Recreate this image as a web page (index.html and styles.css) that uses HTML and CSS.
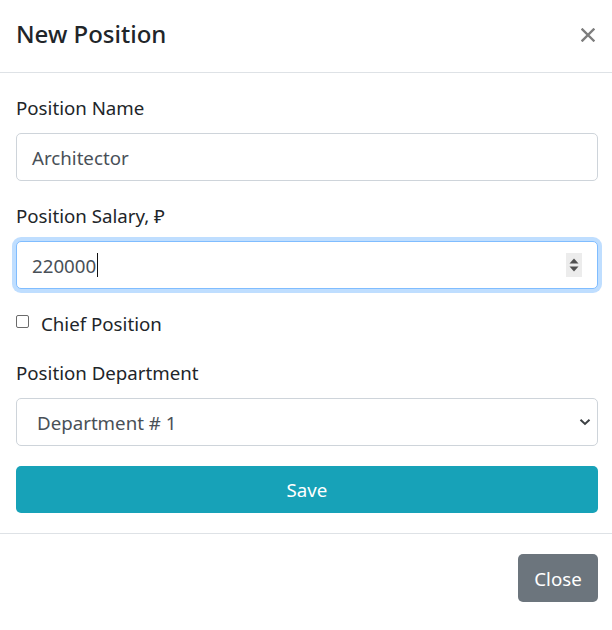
FILE: index.html
```html
<!DOCTYPE html>
<html lang="en">
<head>
<meta charset="utf-8">
<title>New Position</title>
<link rel="stylesheet" href="styles.css">
</head>
<body>
<div class="modal">
  <div class="modal-header">
    <h5 class="modal-title">New Position</h5>
    <button class="close" type="button" aria-label="Close">
      <svg width="14" height="14" viewBox="0 0 14 14"><path d="M1.5 1.5L12.5 12.5M12.5 1.5L1.5 12.5" stroke="#7d7d7d" stroke-width="2.4" stroke-linecap="square"/></svg>
    </button>
  </div>
  <div class="modal-body">
    <div class="form-group">
      <label class="label">Position Name</label>
      <div class="form-control"><span class="value">Architector</span></div>
    </div>
    <div class="form-group">
      <label class="label">Position Salary, ₽</label>
      <div class="form-control focused">
        <span class="value">220000</span><span class="caret"></span>
        <span class="grow"></span>
        <span class="spinner">
          <svg width="16" height="24" viewBox="0 0 16 24"><path d="M3.5 10.5L8 5.5L12.5 10.5Z" fill="#505050"/><path d="M3.5 13.5L8 18.5L12.5 13.5Z" fill="#505050"/></svg>
        </span>
      </div>
    </div>
    <div class="form-check">
      <span class="checkbox"></span>
      <span class="check-label">Chief Position</span>
    </div>
    <div class="form-group">
      <label class="label">Position Department</label>
      <div class="form-control select">
        <span class="value">Department # 1</span>
        <span class="grow"></span>
        <svg class="chevron" width="12" height="8" viewBox="0 0 12 8"><path d="M1.5 1.8L6 6L10.5 1.8" fill="none" stroke="#3c4043" stroke-width="2"/></svg>
      </div>
    </div>
    <button class="btn btn-info" type="button">Save</button>
  </div>
  <div class="modal-footer">
    <button class="btn btn-secondary" type="button">Close</button>
  </div>
</div>
</body>
</html>
```

FILE: styles.css
```css
html, body {
  margin: 0;
  padding: 0;
  background: #fff;
}
body {
  font-family: "Noto Sans", "Open Sans", sans-serif;
  font-size: 18.7px;
  color: #212529;
}
.modal {
  width: 612px;
  background: #fff;
}
.modal-header {
  box-sizing: border-box;
  display: flex;
  align-items: center;
  justify-content: space-between;
  padding: 0 14px 4px 16px;
  border-bottom: 1px solid #dee2e6;
  height: 73px;
}
.modal-title {
  margin: 0;
  font-size: 24px;
  font-weight: 500;
  line-height: 36px;
  color: #212529;
}
.close {
  border: 0;
  background: transparent;
  padding: 0;
  margin-right: 3px;
  margin-top: 2px;
  width: 14px;
  height: 14px;
  display: flex;
}
.modal-body {
  padding: 20px 14px 20px 16px;
}
.form-group {
  margin-bottom: 20px;
}
.label {
  display: block;
  line-height: 30px;
  margin-bottom: 10px;
  color: #212529;
}
.form-control {
  height: 48px;
  box-sizing: border-box;
  border: 1px solid #ced4da;
  border-radius: 5px;
  display: flex;
  align-items: center;
  padding: 0 15px;
  color: #495057;
  background: #fff;
}
.form-control.focused {
  border-color: #80bdff;
  box-shadow: 0 0 0 4px rgba(0, 123, 255, 0.25);
}
.value {
  line-height: 30px;
  padding-top: 1px;
}
.caret {
  width: 1px;
  height: 24px;
  background: #111;
  margin-left: 1px;
}
.grow {
  flex: 1;
}
.spinner {
  width: 16px;
  height: 24px;
  background: #ececec;
  display: flex;
}
.select {
  padding-left: 20px;
  padding-right: 6px;
}
.chevron {
  display: block;
}
.form-check {
  display: flex;
  align-items: center;
  height: 30px;
  margin-bottom: 19px;
}
.checkbox {
  width: 13px;
  height: 13px;
  box-sizing: border-box;
  border: 1px solid #6b6b6b;
  border-radius: 2px;
  margin-right: 12px;
  margin-top: -5px;
}
.check-label {
  line-height: 30px;
}
.btn {
  font-family: "Noto Sans", "Open Sans", sans-serif;
  font-size: 18.7px;
  border: 0;
  border-radius: 5px;
  color: #fff;
  height: 47px;
  padding: 0;
  line-height: 47px;
}
.btn-info {
  display: block;
  width: 100%;
  background: #17a2b8;
}
.modal-footer {
  border-top: 1px solid #dee2e6;
  display: flex;
  justify-content: flex-end;
  padding: 20px 14px 28px 16px;
}
.btn-secondary {
  background: #6c757d;
  width: 80px;
  height: 48px;
}
```
